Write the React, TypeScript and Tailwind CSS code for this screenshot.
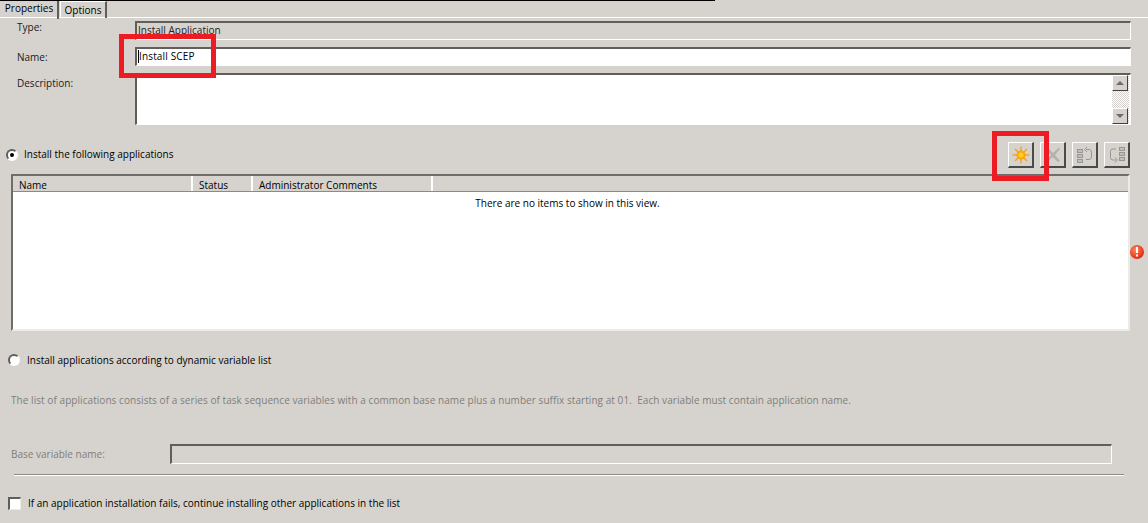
const sunRays = [0, 45, 90, 135, 180, 225, 270, 315];

function SunIcon() {
  return (
    <svg width="18" height="18" viewBox="0 0 18 18">
      {sunRays.map((a) => (
        <rect key={a} x="8.3" y="0.5" width="1.4" height="5" fill="#f9a01b" transform={`rotate(${a} 9 9)`} />
      ))}
      <circle cx="9" cy="9" r="4.5" fill="#fba50f" />
      <circle cx="9" cy="9" r="2.5" fill="#ffd21f" />
    </svg>
  );
}

function DeleteIcon() {
  return (
    <svg width="18" height="18" viewBox="0 0 18 18">
      <path d="M2 3 L5 3 L9 7 L15 1.5 L16 3 L11 9 L16 15 L14 16 L8.5 11 L4 16 L2 15 L7 9 Z" fill="#b4b2ae" />
    </svg>
  );
}

function MoveUpIcon() {
  return (
    <svg width="16" height="18" viewBox="0 0 16 18" fill="none">
      <rect x="0.5" y="3.5" width="5" height="3" fill="#c0bfbb" stroke="#989692" />
      <rect x="0.5" y="8.5" width="5" height="3" fill="#c0bfbb" stroke="#989692" />
      <rect x="0.5" y="13.5" width="5" height="3" fill="#c0bfbb" stroke="#989692" />
      <path d="M9 3.5 H12 Q14.5 3.5 14.5 6 V11 Q14.5 13.5 12 13.5 H9" stroke="#989692" />
      <path d="M10 1 L7.5 3.5 L10 6" stroke="#989692" />
    </svg>
  );
}

function MoveDownIcon() {
  return (
    <svg width="16" height="18" viewBox="0 0 16 18" fill="none">
      <rect x="10.5" y="1.5" width="5" height="3" fill="#c0bfbb" stroke="#989692" />
      <rect x="10.5" y="6.5" width="5" height="3" fill="#c0bfbb" stroke="#989692" />
      <rect x="10.5" y="11.5" width="5" height="3" fill="#c0bfbb" stroke="#989692" />
      <path d="M7 3 H4 Q1.5 3 1.5 5.5 V11.5 Q1.5 14 4 14 H7" stroke="#989692" />
      <path d="M6 11.5 L8.5 14 L6 16.5" stroke="#989692" />
    </svg>
  );
}

function ToolButton({ children }: { children: React.ReactNode }) {
  return (
    <div className="w-[26px] h-[26px] flex items-center justify-center bg-[#d6d3ce] border-t border-l border-t-white border-l-white border-r-2 border-b-2 border-r-[#4a4a48] border-b-[#4a4a48]">
      {children}
    </div>
  );
}

function ScrollButton({ up }: { up: boolean }) {
  return (
    <div className="w-[16px] h-[16px] flex items-center justify-center bg-[#d6d3ce] border-t border-l border-t-white border-l-white border-r border-b border-r-[#404040] border-b-[#404040]">
      <div
        className={
          up
            ? "w-0 h-0 border-x-[4px] border-x-transparent border-b-[4px] border-b-[#6e6c68]"
            : "w-0 h-0 border-x-[4px] border-x-transparent border-t-[4px] border-t-[#6e6c68]"
        }
      />
    </div>
  );
}

function FieldRow({ label, labelPad, height, mb, children, bg }: { label: string; labelPad: string; height: string; mb: string; bg: string; children?: React.ReactNode }) {
  return (
    <div className={`flex ${mb}`}>
      <div className={`w-[135px] pl-[17px] ${labelPad} text-[#1a1a1a]`}>{label}</div>
      <div className={`w-[996px] ${height} ${bg} border-t-2 border-l-2 border-t-[#5f5e5a] border-l-[#5f5e5a] border-r border-b border-r-white border-b-white flex`}>
        {children}
      </div>
    </div>
  );
}

export default function App() {
  return (
    <div className="relative w-[1148px] h-[523px] overflow-hidden bg-[#d6d3ce] text-[10px] leading-[14px] text-black font-['Open_Sans',sans-serif]">
      <div className="w-[715px] h-px bg-black" />

      {/* Tabs */}
      <div className="flex h-[17px] pl-[1px] border-b border-b-white">
        <div className="w-[58px] h-[18px] text-center border-r-2 border-r-[#5f5e5a]">Properties</div>
        <div className="ml-[1px] w-[47px] h-[17px] text-center pt-[1px] border-l border-l-white border-t border-t-white border-r-2 border-r-[#5f5e5a]">Options</div>
      </div>

      {/* Fields */}
      <div className="pt-[3px]">
        <FieldRow label="Type:" labelPad="-mt-px" height="h-[19px]" mb="mb-[7px]" bg="bg-[#d6d3ce]">
          <span className="pl-[1px] text-[#222]">Install Application</span>
        </FieldRow>
        <FieldRow label="Name:" labelPad="pt-[3px]" height="h-[19px]" mb="mb-[7px]" bg="bg-white">
          <span className="pl-[1px] tracking-[0.15px]">
            <span className="inline-block w-px h-[13px] bg-black align-[-3px]" />
            Install SCEP
          </span>
        </FieldRow>
        <FieldRow label="Description:" labelPad="pt-[3px]" height="h-[52px]" mb="mb-[17px]" bg="bg-white">
          <div className="ml-auto w-[17px] h-full flex flex-col justify-between bg-[repeating-conic-gradient(#d6d3ce_0_25%,#ffffff_0_50%)] bg-[length:2px_2px] mr-px">
            <ScrollButton up />
            <ScrollButton up={false} />
          </div>
        </FieldRow>
      </div>

      {/* Install the following applications + toolbar */}
      <div className="flex items-center h-[26px] pl-[6px] pr-[18px] mb-[6px]">
        <div className="w-[12px] h-[12px] rounded-full bg-white border-2 border-[#5f5e5a] border-r-white border-b-white flex items-center justify-center">
          <div className="w-[4px] h-[4px] rounded-full bg-black" />
        </div>
        <span className="ml-[6px] -mt-[2px]">Install the following applications</span>
        <div className="ml-auto flex gap-[6px]">
          <ToolButton><SunIcon /></ToolButton>
          <ToolButton><DeleteIcon /></ToolButton>
          <ToolButton><MoveUpIcon /></ToolButton>
          <ToolButton><MoveDownIcon /></ToolButton>
        </div>
      </div>

      {/* List view */}
      <div className="ml-[11px] w-[1119px] h-[157px] bg-white border-t-2 border-l-2 border-t-[#6e6d69] border-l-[#6e6d69] border-r-2 border-b-2 border-r-[#ecebe7] border-b-[#ecebe7]">
        <div className="flex h-[16px] pt-[2px] bg-[#d6d3ce] border-b border-b-[#8c8a86]">
          <div className="w-[180px] -mt-[2px] pt-[2px] pl-[6px] border-r-2 border-r-white">Name</div>
          <div className="w-[60px] -mt-[2px] pt-[2px] pl-[6px] border-r-2 border-r-white">Status</div>
          <div className="w-[180px] -mt-[2px] pt-[2px] pl-[6px] border-r-2 border-r-white">Administrator Comments</div>
        </div>
        <div className="text-center pt-[4px] pr-[6px]">There are no items to show in this view.</div>
      </div>

      {/* Dynamic variable list */}
      <div className="flex items-center h-[14px] pl-[8px] mt-[22px]">
        <div className="w-[12px] h-[12px] rounded-full bg-white border-2 border-[#5f5e5a] border-r-white border-b-white" />
        <span className="ml-[7px]">Install applications according to dynamic variable list</span>
      </div>
      <div className="pl-[11px] mt-[26px] text-[#807e7a] tracking-[0.06px]">
        The list of applications consists of a series of task sequence variables with a common base name plus a number suffix starting at 01.&nbsp; Each variable must contain application name.
      </div>
      <div className="flex items-center mt-[37px] pl-[11px]">
        <span className="w-[159px] text-[#807e7a]">Base variable name:</span>
        <div className="w-[942px] h-[20px] border-t-2 border-l-2 border-t-[#5f5e5a] border-l-[#5f5e5a] border-r border-b border-r-white border-b-white" />
      </div>
      <div className="ml-[14px] mt-[10px] w-[1110px] h-[2px] bg-[#8c8a86] border-b border-b-white" />
      <div className="flex items-center h-[14px] pl-[8px] mt-[20px]">
        <div className="w-[13px] h-[13px] bg-white border-t-2 border-l-2 border-t-[#5f5e5a] border-l-[#5f5e5a] border-r border-b border-r-[#ecebe7] border-b-[#ecebe7]" />
        <span className="ml-[7px]">If an application installation fails, continue installing other applications in the list</span>
      </div>

      {/* Validation icon */}
      <div className="absolute left-[1130px] top-[245px] w-[14px] h-[14px] rounded-full bg-[radial-gradient(circle_at_40%_35%,#ff8a5c,#e6341a_65%,#8c2a20)] flex items-center justify-center">
        <svg width="4" height="10" viewBox="0 0 4 10">
          <rect x="1" y="0" width="2" height="6" fill="#fff" />
          <rect x="1" y="7.5" width="2" height="2" fill="#fff" />
        </svg>
      </div>

      {/* Annotations */}
      <div className="absolute left-[119px] top-[34px] w-[97px] h-[44px] border-[5px] border-[#ed1c24]" />
      <div className="absolute left-[992px] top-[131px] w-[57px] h-[50px] border-[5px] border-[#ed1c24]" />
    </div>
  );
}
